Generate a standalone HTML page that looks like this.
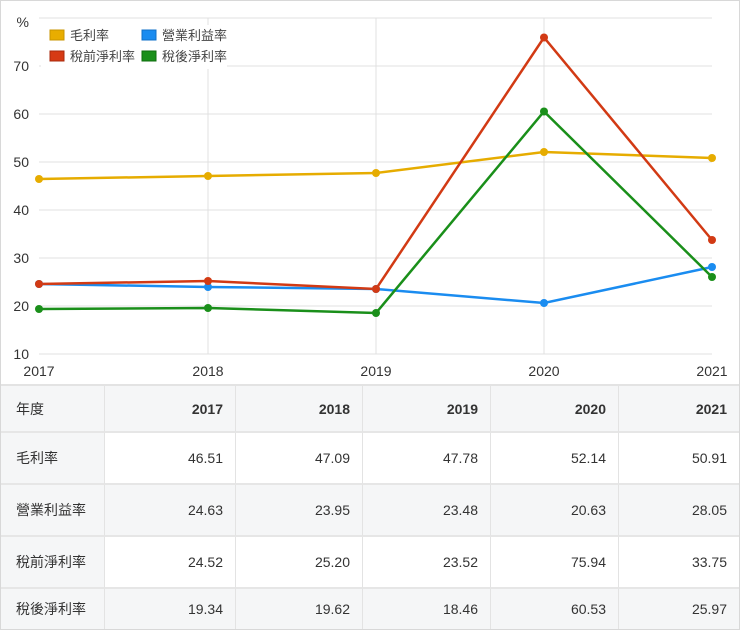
<!DOCTYPE html>
<html><head><meta charset="utf-8"><style>
body{margin:0;width:740px;height:630px;overflow:hidden;background:#fff;font-family:"Liberation Sans","Noto Sans CJK TC",sans-serif;}
#w{position:relative;width:738px;height:628px;border:1px solid #d8d8d8;}
.c{position:absolute;box-sizing:border-box;font-size:14px;color:#333;line-height:1;display:flex;align-items:center;justify-content:flex-end;padding-right:12px;border-right:1px solid #e3e3e3;border-bottom:2px solid #e6e6e6;}
.g{background:#f5f6f7}
.l{justify-content:flex-start;padding-left:15px;padding-right:0}
.h{font-weight:bold}
</style></head><body><div id="w">
<svg width="738" height="384" style="position:absolute;left:0;top:0" font-family="Liberation Sans, Noto Sans CJK TC, sans-serif">
<g stroke="#e0e0e0" stroke-width="1">
<line x1="38" x2="711" y1="17" y2="17"/><line x1="38" x2="711" y1="65" y2="65"/><line x1="38" x2="711" y1="113" y2="113"/><line x1="38" x2="711" y1="161" y2="161"/><line x1="38" x2="711" y1="209" y2="209"/><line x1="38" x2="711" y1="257" y2="257"/><line x1="38" x2="711" y1="305" y2="305"/><line x1="38" x2="711" y1="353" y2="353"/>
<line x1="207" x2="207" y1="17" y2="353"/><line x1="375" x2="375" y1="17" y2="353"/><line x1="543" x2="543" y1="17" y2="353"/>
</g>
<g font-size="14" fill="#333" text-anchor="end">
<text x="28" y="26">%</text><text x="28" y="70">70</text><text x="28" y="118">60</text><text x="28" y="166">50</text><text x="28" y="214">40</text><text x="28" y="262">30</text><text x="28" y="310">20</text><text x="28" y="358">10</text>
</g>
<g font-size="14" fill="#333" text-anchor="middle">
<text x="38" y="375">2017</text><text x="207" y="375">2018</text><text x="375" y="375">2019</text><text x="543" y="375">2020</text><text x="711" y="375">2021</text>
</g>
<rect x="40" y="24" width="186" height="44" fill="#fff"/>
<g font-size="13" fill="#444">
<rect x="49" y="29" width="14" height="10" fill="#e8ad00" stroke="#c99500"/><text x="69" y="39">毛利率</text>
<rect x="141" y="29" width="14" height="10" fill="#1a8cf0" stroke="#1070c8"/><text x="161" y="39">營業利益率</text>
<rect x="49" y="50" width="14" height="10" fill="#d63a14" stroke="#a82a0c"/><text x="69" y="60">稅前淨利率</text>
<rect x="141" y="50" width="14" height="10" fill="#1a8f1a" stroke="#0e6e0e"/><text x="161" y="60">稅後淨利率</text>
</g>
<g fill="none" stroke-width="2.5">
<polyline stroke="#e6ac00" points="38,178 207,175 375,172 543,151 711,157"/>
<polyline stroke="#1a8cf0" points="38,283 207,286 375,288 543,302 711,266"/>
<polyline stroke="#d23a14" points="38,283 207,280 375,288 543,36.5 711,239"/>
<polyline stroke="#1a8f1a" points="38,308 207,307 375,312 543,110.5 711,276"/>
</g>
<g fill="#e6ac00"><circle cx="38" cy="178" r="4"/><circle cx="207" cy="175" r="4"/><circle cx="375" cy="172" r="4"/><circle cx="543" cy="151" r="4"/><circle cx="711" cy="157" r="4"/></g>
<g fill="#1a8cf0"><circle cx="38" cy="283" r="4"/><circle cx="207" cy="286" r="4"/><circle cx="375" cy="288" r="4"/><circle cx="543" cy="302" r="4"/><circle cx="711" cy="266" r="4"/></g>
<g fill="#d23a14"><circle cx="38" cy="283" r="4"/><circle cx="207" cy="280" r="4"/><circle cx="375" cy="288" r="4"/><circle cx="543" cy="36.5" r="4"/><circle cx="711" cy="239" r="4"/></g>
<g fill="#1a8f1a"><circle cx="38" cy="308" r="4"/><circle cx="207" cy="307" r="4"/><circle cx="375" cy="312" r="4"/><circle cx="543" cy="110.5" r="4"/><circle cx="711" cy="276" r="4"/></g>
</svg>
<div style="position:absolute;left:0;top:383px;width:738px;height:2px;background:#e3e3e3"></div>
<!-- header -->
<div class="c g l" style="left:0;top:385px;width:104px;height:47px">年度</div>
<div class="c g h" style="left:104px;top:385px;width:131px;height:47px">2017</div>
<div class="c g h" style="left:235px;top:385px;width:127px;height:47px">2018</div>
<div class="c g h" style="left:362px;top:385px;width:128px;height:47px">2019</div>
<div class="c g h" style="left:490px;top:385px;width:128px;height:47px">2020</div>
<div class="c g h" style="left:618px;top:385px;width:120px;height:47px;border-right:0">2021</div>
<!-- row1 -->
<div class="c g l" style="left:0;top:432px;width:104px;height:52px">毛利率</div>
<div class="c" style="left:104px;top:432px;width:131px;height:52px">46.51</div>
<div class="c" style="left:235px;top:432px;width:127px;height:52px">47.09</div>
<div class="c" style="left:362px;top:432px;width:128px;height:52px">47.78</div>
<div class="c" style="left:490px;top:432px;width:128px;height:52px">52.14</div>
<div class="c" style="left:618px;top:432px;width:120px;height:52px;border-right:0">50.91</div>
<!-- row2 -->
<div class="c g l" style="left:0;top:484px;width:104px;height:52px">營業利益率</div>
<div class="c g" style="left:104px;top:484px;width:131px;height:52px">24.63</div>
<div class="c g" style="left:235px;top:484px;width:127px;height:52px">23.95</div>
<div class="c g" style="left:362px;top:484px;width:128px;height:52px">23.48</div>
<div class="c g" style="left:490px;top:484px;width:128px;height:52px">20.63</div>
<div class="c g" style="left:618px;top:484px;width:120px;height:52px;border-right:0">28.05</div>
<!-- row3 -->
<div class="c g l" style="left:0;top:536px;width:104px;height:52px">稅前淨利率</div>
<div class="c" style="left:104px;top:536px;width:131px;height:52px">24.52</div>
<div class="c" style="left:235px;top:536px;width:127px;height:52px">25.20</div>
<div class="c" style="left:362px;top:536px;width:128px;height:52px">23.52</div>
<div class="c" style="left:490px;top:536px;width:128px;height:52px">75.94</div>
<div class="c" style="left:618px;top:536px;width:120px;height:52px;border-right:0">33.75</div>
<!-- row4 -->
<div class="c g l" style="left:0;top:588px;width:104px;height:40px;border-bottom:0">稅後淨利率</div>
<div class="c g" style="left:104px;top:588px;width:131px;height:40px;border-bottom:0">19.34</div>
<div class="c g" style="left:235px;top:588px;width:127px;height:40px;border-bottom:0">19.62</div>
<div class="c g" style="left:362px;top:588px;width:128px;height:40px;border-bottom:0">18.46</div>
<div class="c g" style="left:490px;top:588px;width:128px;height:40px;border-bottom:0">60.53</div>
<div class="c g" style="left:618px;top:588px;width:120px;height:40px;border-right:0;border-bottom:0">25.97</div>
</div></body></html>
